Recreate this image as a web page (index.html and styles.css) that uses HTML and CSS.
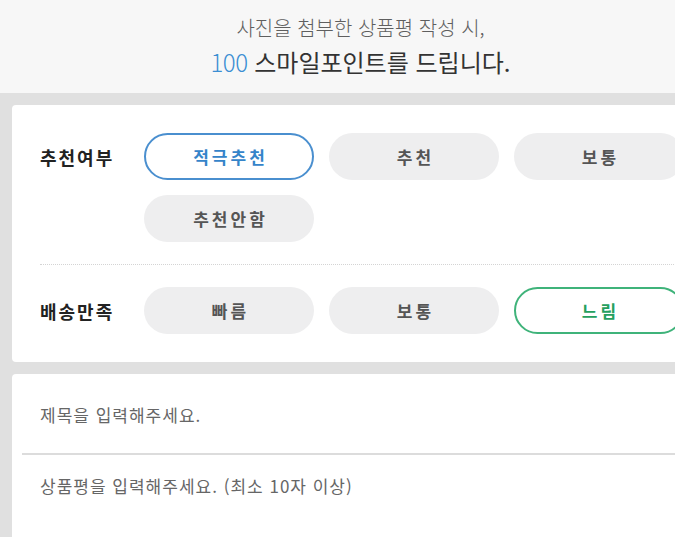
FILE: index.html
```html
<!DOCTYPE html>
<html lang="ko">
<head>
<meta charset="utf-8">
<link rel="stylesheet" href="styles.css">
</head>
<body>
<div class="page">
  <header class="banner">
    <p class="line1">사진을 첨부한 상품평 작성 시,</p>
    <p class="line2"><span class="pts">100</span> 스마일포인트를 드립니다.</p>
  </header>
  <section class="card rate">
    <div class="row">
      <div class="label">추천여부</div>
      <div class="opts">
        <button class="pill sel-blue">적극추천</button>
        <button class="pill">추천</button>
        <button class="pill">보통</button>
        <button class="pill">추천안함</button>
      </div>
    </div>
    <div class="sep"></div>
    <div class="row">
      <div class="label">배송만족</div>
      <div class="opts">
        <button class="pill">빠름</button>
        <button class="pill">보통</button>
        <button class="pill sel-green">느림</button>
      </div>
    </div>
  </section>
  <section class="card write">
    <div class="field title">제목을 입력해주세요.</div>
    <div class="field body">상품평을 입력해주세요. (최소 10자 이상)</div>
  </section>
</div>
</body>
</html>
```
FILE: styles.css
```css
html, body {
  margin: 0;
  padding: 0;
  width: 675px;
  height: 537px;
  overflow: hidden;
  background: #e0e0e0;
  font-family: "Noto Sans CJK KR", "Noto Sans", sans-serif;
}
.page {
  width: 675px;
  height: 537px;
  overflow: hidden;
}
.banner {
  background: #f7f7f7;
  height: 93px;
  padding-left: 46px;
  box-sizing: border-box;
  text-align: center;
  padding-top: 12px;
}
.banner p { margin: 0; }
.line1 {
  font-size: 20px;
  font-weight: 300;
  color: #5f5f5f;
  line-height: 31px;
}
.line2 {
  font-size: 24px;
  font-weight: 400;
  color: #333;
  line-height: 38px;
  margin-top: 0;
}
.line2 .pts {
  color: #3b8ed3;
  font-weight: 300;
  letter-spacing: -0.5px;
}
.card {
  background: #fff;
  margin-left: 12px;
  width: 720px;
  border-radius: 4px 0 0 4px;
  box-sizing: border-box;
}
.rate {
  margin-top: 12px;
  padding: 28px 0 28px 28px;
}
.row {
  display: flex;
  align-items: flex-start;
}
.label {
  width: 104px;
  height: 47px;
  display: flex;
  align-items: center;
  font-size: 18px;
  font-weight: 700;
  color: #222;
  letter-spacing: 2px;
}
.opts {
  display: grid;
  grid-template-columns: repeat(3, 170px);
  gap: 15px;
}
.pill {
  width: 170px;
  height: 47px;
  border-radius: 24px;
  border: 2px solid transparent;
  background: #eeeeef;
  font-family: inherit;
  font-size: 17px;
  font-weight: 700;
  color: #555;
  letter-spacing: 3px;
  padding: 0 0 0 3px;
}
.pill.sel-blue {
  background: #fff;
  border-color: #4a8fcf;
  color: #3584c9;
}
.pill.sel-green {
  background: #fff;
  border-color: #3fb37a;
  color: #26a05e;
}
.sep {
  border-top: 1px dotted #d4d4d4;
  margin: 22px 0 22px 0;
}
.write {
  margin-top: 12px;
  height: 200px;
}
.field {
  font-size: 17px;
  color: #666;
  letter-spacing: 1px;
}
.field.title {
  height: 81px;
  box-sizing: border-box;
  padding: 28px 0 0 18px;
  border-bottom: 2px solid #dcdcdc;
  margin-left: 10px;
}
.field.body {
  padding: 18px 0 0 28px;
}
```
